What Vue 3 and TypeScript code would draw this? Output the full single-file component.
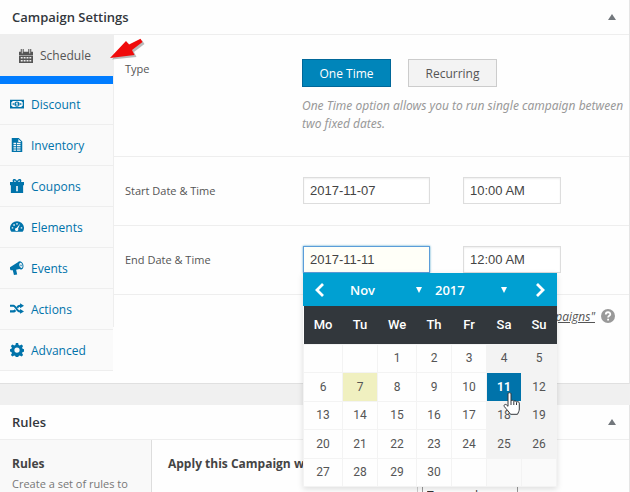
<script setup lang="ts">
import { ref } from 'vue'

interface Tab {
  label: string
  icon: string
}

interface Day {
  n: number | null
}

const tabs: Tab[] = [
  { label: 'Schedule', icon: 'M0 3h2V0h1.200v5h1V0h1.200v3h5.200V0h1.200v5h1V0H14v3h2v4H0zM0 7.800h16V16H0zM2 9v1.800h2.200V9zm3.300 0v1.800h2.200V9zm3.300 0v1.800h2.200V9zm3.300 0v1.800H14V9zM2 12.500v1.800h2.200v-1.800zm3.300 0v1.800h2.200v-1.800zm3.300 0v1.800h2.200v-1.800zm3.300 0v1.800H14v-1.800z' },
  { label: 'Discount', icon: 'M0 3h16v10H0zM3 4.500A2 2 0 0 1 1.500 6v4A2 2 0 0 1 3 11.500h10A2 2 0 0 1 14.500 10V6A2 2 0 0 1 13 4.500zM8 5a3 3 0 1 1 0 6a3 3 0 0 1 0-6zM7.500 6.300L6.600 7v.6h.8V9H6.500v.8h3V9h-.8V6.300zM3 7.200h1.500v1.600H3zM11.500 7.200H13v1.600h-1.500z' },
  { label: 'Inventory', icon: 'M2 0h8l4 4v12H2zM9.500 1v3.500H13zM4 5.500v1.500h3V5.500zm4 0v1.500h4V5.500zM4 8v1.500h3V8zm4 0v1.500h4V8zM4 10.500V12h3v-1.500zm4 0V12h4v-1.500zM4 13v1.500h3V13zm4 0v1.500h4V13z' },
  { label: 'Coupons', icon: 'M0 3.500h3.500C1.500 0 6-1.500 8 2.300C10-1.500 14.500 0 12.500 3.500H16V7h-1v9H1V7H0zM4.800 3h2.100C6 1.500 4.200 1.400 4.800 3zM9.100 3h2.100C11.800 1.400 10 1.500 9.100 3zM7.100 8v6h1.800V8z' },
  { label: 'Elements', icon: 'M1.600 13.500A8 7.500 0 1 1 14.400 13.500zM7.100 3.600v1.600h1.800V3.600zM3.800 4.900v1.600h1.700V4.900zM2 8.200v1.600h1.700V8.200zM12.300 8.200v1.600H14V8.200zM11.600 4.300L7.500 9a1.800 1.800 0 1 0 1.700 1z' },
  { label: 'Events', icon: 'M0 7l9-5.500C10 .2 12 0 13.500 1.300C16 3.500 16 8 13.700 9.400c-1 .6-2.200.4-3-.2L7 10l1.200 5.300L4.500 16 3.200 10.600 1 10.500C-.3 9.500-.3 8 0 7zM11.300 2.200c-1.600 1.300-.3 6 2 5.800c2-.8.800-6.500-2-5.800zM11.700 4.200l1.200-.3.600 1.800-1.200.5z' },
  { label: 'Actions', icon: 'M0 3h4c3 0 4.500 6.500 7.500 6.500V8L16 10.800 11.500 13.500V12C7 12 6 5.500 3.600 5.500H0zM0 9.500h3.500c.8 0 1.300-.5 1.900-1.300l1.600 2C6 11.500 5 12 3.800 12H0zM7.400 5.700C8.500 4 9.600 3 11.500 3V1.500L16 4.300 11.500 7V5.500c-1 0-1.600.8-2.400 2z' },
  { label: 'Advanced', icon: 'M6.700 0h2.600l.5 2.200 1.400.6 2-1.200 1.700 1.800-1.100 1.900.6 1.400 2.100.5v2.600l-2.100.5-.6 1.400 1.200 2-1.800 1.700-2-1.200-1.400.6-.5 2.200H6.700l-.5-2.200-1.400-.6-2 1.200L1 13.700l1.200-2-.6-1.400L0 9.800V7.200l1.600-.5.6-1.400L1 3.400l1.800-1.800 2 1.200 1.400-.6zM8 5a3 3 0 1 0 0 6a3 3 0 0 0 0-6z' },
]
const active = ref('Schedule')
const mode = ref('One Time')
const startDate = ref('2017-11-07')
const startTime = ref('10:00 AM')
const endDate = ref('2017-11-11')
const endTime = ref('12:00 AM')
const month = ref('Nov')
const year = ref('2017')
const weekdays = ['Mo', 'Tu', 'We', 'Th', 'Fr', 'Sa', 'Su']
const selected = ref(11)
const today = 7

const weeks: Day[][] = Array.from({ length: 5 }, (_, w) =>
  Array.from({ length: 7 }, (_, d) => {
    const n = w * 7 + d - 1
    return { n: n >= 1 && n <= 30 ? n : null }
  }),
)
</script>

<template>
  <main class="page">
    <section class="panel settings">
      <header class="head">
        <h2>Campaign Settings</h2>
        <button class="toggle" aria-label="Toggle panel"><svg viewBox="0 0 8 6"><path d="M4 0L8 6H0z" /></svg></button>
      </header>
      <div class="body">
        <nav class="tabs">
          <a v-for="t in tabs" :key="t.label" href="#" class="tab" :class="{ active: t.label === active }" @click.prevent="active = t.label">
            <svg viewBox="0 0 16 16"><path fill-rule="evenodd" :d="t.icon" /></svg>
            <span>{{ t.label }}</span>
          </a>
        </nav>
        <div class="fields">
          <div class="row type-row">
            <span class="label">Type</span>
            <div class="control">
              <div class="modes">
                <button class="mode" :class="{ on: mode === 'One Time' }" @click="mode = 'One Time'">One Time</button>
                <button class="mode" :class="{ on: mode === 'Recurring' }" @click="mode = 'Recurring'">Recurring</button>
              </div>
              <p class="hint">One Time option allows you to run single campaign between two fixed dates.</p>
            </div>
          </div>
          <div class="row">
            <label class="label" for="start">Start Date &amp; Time</label>
            <div class="control pair">
              <input id="start" v-model="startDate" class="date" type="text">
              <input v-model="startTime" class="time" type="text" aria-label="Start time">
            </div>
          </div>
          <div class="row">
            <label class="label" for="end">End Date &amp; Time</label>
            <div class="control pair">
              <div class="anchor">
                <input id="end" v-model="endDate" class="date focused" type="text">
                <div class="calendar">
                  <div class="cal-head">
                    <button class="nav" aria-label="Previous month"><svg viewBox="0 0 10 14"><path d="M8 1L2 7L8 13" /></svg></button>
                    <span class="pick">
                      <select v-model="month" aria-label="Month"><option>Oct</option><option>Nov</option><option>Dec</option></select>
                      <svg viewBox="0 0 6 6"><path d="M0 0h6L3 6z" /></svg>
                    </span>
                    <span class="pick">
                      <select v-model="year" aria-label="Year"><option>2016</option><option>2017</option><option>2018</option></select>
                      <svg viewBox="0 0 6 6"><path d="M0 0h6L3 6z" /></svg>
                    </span>
                    <button class="nav" aria-label="Next month"><svg viewBox="0 0 10 14"><path d="M2 1L8 7L2 13" /></svg></button>
                  </div>
                  <table>
                    <thead>
                      <tr><th v-for="d in weekdays" :key="d">{{ d }}</th></tr>
                    </thead>
                    <tbody>
                      <tr v-for="(week, w) in weeks" :key="w">
                        <td v-for="(day, d) in week" :key="d" :class="{ weekend: d > 4, empty: !day.n, today: day.n === today, selected: day.n === selected }">
                          <button v-if="day.n" @click="selected = day.n">{{ day.n }}</button>
                          <svg v-if="day.n === 11" class="hand" viewBox="0 0 18 24"><path d="M5 1.800C5 .4 8 .4 8 1.800V9c.3-1 2.600-.9 2.800.4c.5-.9 2.600-.6 2.700.7c.6-.8 2.800-.4 2.800 1V17c0 2-1 3.500-1.800 5.300H7.500C6 19.500 3.500 17.500 1.300 14.500c-.8-1.500.8-2.700 2-1.800L5 14.300z" /><path d="M8 9v4M10.800 9.500V13M13.500 10.300V13" /></svg>
                        </td>
                      </tr>
                    </tbody>
                  </table>
                </div>
              </div>
              <input v-model="endTime" class="time" type="text" aria-label="End time">
            </div>
          </div>
          <div class="help">
            <a href="#">"Campaigns"</a>
            <svg viewBox="0 0 14 14"><circle cx="7" cy="7" r="7" fill="#999" /><path d="M4.800 5.500C4.800 2.500 9.300 2.600 9.300 5.200C9.300 6.900 7.100 6.800 7.100 8.600" fill="none" stroke="#fff" stroke-width="1.800" /><path d="M6.200 9.800h1.800v1.800H6.200z" fill="#fff" /></svg>
          </div>
        </div>
      </div>
      <svg class="pointer" viewBox="0 0 36 26"><path class="shade" d="M2 21.500L17.500 4.500L20.500 8L32 2.200L34.500 6L24 14L26.500 19z" /><path d="M0 20L16 3L19 6.500L30.500 .7L32.500 4L22 12L24.500 17z" /></svg>
    </section>

    <section class="panel">
      <header class="head">
        <h2>Rules</h2>
        <button class="toggle" aria-label="Toggle panel"><svg viewBox="0 0 8 6"><path d="M4 0L8 6H0z" /></svg></button>
      </header>
      <div class="body">
        <div class="about">
          <h3>Rules</h3>
          <p>Create a set of rules to</p>
        </div>
        <div class="rules">
          <h3>Apply this Campaign when</h3>
          <div class="rule">
            <div class="cell"></div>
            <div class="choice"><select aria-label="Rule"><option>Type and</option></select></div>
          </div>
        </div>
      </div>
    </section>
  </main>
</template>

<style>
body {
  overflow: hidden;
  background: #f0f0f0;
}
</style>

<style scoped>
* {
  box-sizing: border-box;
}

.page {
  display: flex;
  flex-direction: column;
  gap: 21px;
  height: 100vh;
  overflow: hidden;
  font-family: "Open Sans", "Noto Sans", sans-serif;
  font-size: 12px;
  color: #555;
}

h2,
h3,
p {
  margin: 0;
}

button {
  font: inherit;
  cursor: pointer;
}

.panel {
  position: relative;
  flex: none;
  background: #fefefe;
  border-right: 1px solid #e5e5e5;
  border-bottom: 1px solid #e0e0e0;
}

.settings {
  padding-bottom: 12px;
}

.head {
  display: flex;
  align-items: center;
  justify-content: space-between;
  height: 35px;
  padding: 0 13px 0 12px;
  border-bottom: 1px solid #eee;
}

h2 {
  font-size: 13px;
  font-weight: 600;
  color: #32373c;
}

.toggle {
  display: flex;
  padding: 0;
  border: 0;
  background: none;
}

.toggle svg {
  width: 8px;
  height: 6px;
  fill: #72777c;
}

.body {
  display: flex;
}

.tabs {
  flex: none;
  width: 113px;
}

.tab {
  display: flex;
  align-items: center;
  gap: 7px;
  height: 41px;
  padding-left: 10px;
  background: #fafafa;
  border-bottom: 1px solid #eee;
  color: #0073aa;
  font-size: 12px;
  text-decoration: none;
}

.tab svg {
  width: 14px;
  height: 14px;
  fill: currentColor;
}

.tab.active {
  height: 49px;
  padding-left: 19px;
  border-bottom: 8px solid #007cff;
  background: #eee;
  color: #555;
}

.fields {
  flex: 1;
}

.row {
  display: flex;
  min-height: 69px;
  padding: 20px 0 0 11px;
  border-left: 1px solid #eee;
  border-bottom: 1px solid #eee;
}

.type-row {
  min-height: 122px;
  padding-top: 24px;
}

.label {
  flex: none;
  width: 177px;
  padding-top: 5px;
  font-size: 11px;
  line-height: 18px;
}

.type-row .label {
  padding-top: 1px;
}

.control {
  flex: 1;
}

.modes {
  display: flex;
  gap: 17px;
}

.mode {
  width: 89px;
  height: 28px;
  padding: 0;
  border: 1px solid #ccc;
  background: #f3f3f3;
  color: #555;
}

.mode.on {
  border-color: #006799;
  background: #0085ba;
  color: #fff;
}

.hint {
  padding-top: 10px;
  color: #999;
  font-family: "Noto Sans", "Open Sans", sans-serif;
  font-style: italic;
  line-height: 18px;
}

.pair {
  display: flex;
  align-items: flex-start;
  gap: 33px;
  padding-left: 1px;
}

.anchor {
  position: relative;
}

input {
  display: block;
  height: 27px;
  padding: 0 6px;
  border: 1px solid #ddd;
  background: #fff;
  color: #444;
  font: 13px "Liberation Sans", sans-serif;
  box-shadow: inset 0 1px 2px #00000012;
}

.date {
  width: 127px;
}

.time {
  width: 98px;
}

.focused {
  border-color: #5b9dd9;
  background: #fffff8;
  box-shadow: 0 0 2px #1e8cbecc;
}

.calendar {
  position: absolute;
  z-index: 2;
  top: 100%;
  left: 0;
  width: 254px;
  background: #fefefe;
  box-shadow: 0 2px 6px #00000022;
  font-family: Roboto, "Liberation Sans", sans-serif;
}

.cal-head {
  display: flex;
  align-items: center;
  height: 33px;
  padding: 0 9px;
  background: #00a0d2;
}

.nav {
  display: flex;
  flex: none;
  width: 16px;
  padding: 0 3px;
  border: 0;
  background: none;
}

.nav svg {
  width: 10px;
  height: 14px;
  fill: none;
  stroke: #fff;
  stroke-width: 2.800;
}

.pick {
  display: flex;
  flex: 1;
  align-items: center;
  padding: 0 8px 0 22px;
}

.pick + .pick {
  padding: 0 25px 0 5px;
}

.pick select {
  flex: 1;
  min-width: 0;
  padding: 0;
  border: 0;
  appearance: none;
  background: none;
  color: #fff;
  font: 600 13px "Open Sans", sans-serif;
}

.pick svg {
  flex: none;
  width: 6px;
  height: 6px;
  fill: #fff;
}

table {
  width: 100%;
  height: 181px;
  border-collapse: collapse;
  table-layout: fixed;
}

th {
  height: 38px;
  padding: 0;
  background: #32373c;
  color: #fff;
  font-size: 13px;
  font-weight: 500;
}

th:nth-child(1),
th:nth-child(3) {
  width: 39px;
}

td {
  position: relative;
  padding: 0;
  border: 1px solid #f3f3f3;
  text-align: center;
}

td button {
  width: 100%;
  height: 26px;
  padding: 0;
  border: 0;
  background: none;
  color: #555;
  font-size: 12px;
}

td.weekend {
  background: #f3f3f3;
}

td.weekend.empty {
  background: #fafafa;
}

td.today {
  background: #f0f0c0;
}

td.selected {
  background: #0073aa;
}

td.selected button {
  color: #fff;
  font-weight: 700;
}

.hand {
  position: absolute;
  z-index: 3;
  top: 19px;
  left: 16px;
  width: 18px;
  height: 24px;
  fill: #fff;
  stroke: #32373c;
}

.help {
  display: flex;
  align-items: center;
  justify-content: flex-end;
  gap: 6px;
  height: 32px;
  padding: 10px 14px 0 0;
  border-left: 1px solid #eee;
}

.help a {
  color: #555;
  font-style: italic;
}

.help svg {
  width: 14px;
  height: 14px;
}

.pointer {
  position: absolute;
  top: 38px;
  left: 110px;
  width: 36px;
  height: 26px;
  fill: #f00b0b;
}

.shade {
  fill: #00000044;
}

h3 {
  font-size: 12px;
  font-weight: 700;
  line-height: 20px;
  color: #444;
}

.about {
  flex: none;
  width: 152px;
  padding: 14px 12px;
  border-right: 1px solid #ddd;
  background: #f9f9f9;
}

.about p {
  color: #777;
  font-size: 11px;
  line-height: 20px;
}

.rules {
  flex: 1;
  padding: 14px 16px;
}

.rule {
  display: flex;
  padding-top: 9px;
}

.cell {
  width: 250px;
  border-right: 1px solid #ccc;
}

.choice {
  padding-left: 4px;
}

.choice select {
  width: 96px;
  height: 24px;
  border: 1px solid #999;
  background: #fff;
  color: #333;
  font: 12px "Open Sans", sans-serif;
}
</style>
